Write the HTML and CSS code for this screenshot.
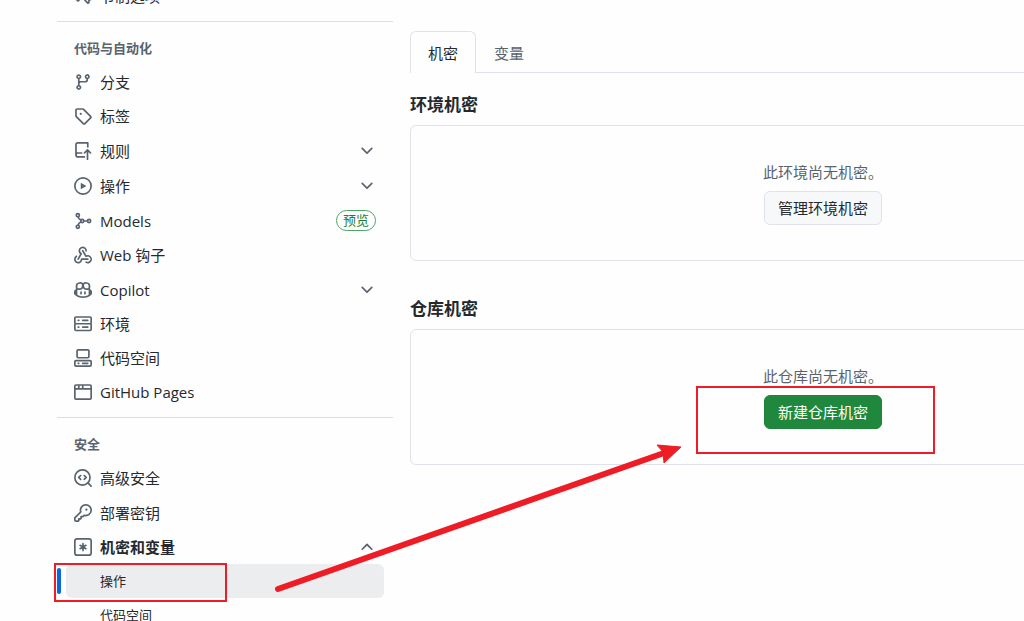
FILE: index.html
```html
<!DOCTYPE html>
<html lang="zh-CN">
<head>
    <meta charset="UTF-8">
    <meta name="viewport" content="width=device-width, initial-scale=1.0">
    <title>机密和变量 · 操作</title>
    <link rel="stylesheet" href="styles.css">
</head>
<body>

<div class="layout">
    <!-- 侧边栏 -->
    <nav class="sidebar" aria-label="仓库设置">
        <ul class="nav-list">
            <li><a class="nav-item" href="#">
                <svg class="icon" viewBox="0 0 16 16"><path d="M1.75 1h8.5c.966 0 1.75.784 1.75 1.75v5.5A1.75 1.75 0 0 1 10.25 10H7.061l-2.574 2.573A1.458 1.458 0 0 1 2 11.543V10h-.25A1.75 1.75 0 0 1 0 8.25v-5.5C0 1.784.784 1 1.75 1ZM1.5 2.75v5.5c0 .138.112.25.25.25h1a.75.75 0 0 1 .75.75v2.19l2.72-2.72a.749.749 0 0 1 .53-.22h3.5a.25.25 0 0 0 .25-.25v-5.5a.25.25 0 0 0-.25-.25h-8.5a.25.25 0 0 0-.25.25Zm13 2a.25.25 0 0 0-.25-.25h-.5a.75.75 0 0 1 0-1.5h.5c.966 0 1.75.784 1.75 1.75v5.5A1.75 1.75 0 0 1 14.25 12H14v1.543a1.458 1.458 0 0 1-2.487 1.03L9.22 12.28a.749.749 0 0 1 1.06-1.06l2.22 2.22v-2.19a.75.75 0 0 1 .75-.75h1a.25.25 0 0 0 .25-.25Z"/></svg>
                <span class="label">节制选项</span>
            </a></li>
        </ul>

        <section class="nav-group">
            <h3>代码与自动化</h3>
            <ul class="nav-list">
                <li><a class="nav-item" href="#">
                    <svg class="icon" viewBox="0 0 16 16"><path d="M9.5 3.25a2.25 2.25 0 1 1 3 2.122V6A2.5 2.5 0 0 1 10 8.5H6a1 1 0 0 0-1 1v1.128a2.251 2.251 0 1 1-1.5 0V5.372a2.25 2.25 0 1 1 1.5 0v1.836A2.493 2.493 0 0 1 6 7h4a1 1 0 0 0 1-1v-.628A2.25 2.25 0 0 1 9.5 3.25Zm-6 0a.75.75 0 1 0 1.5 0 .75.75 0 0 0-1.5 0Zm8.25-.75a.75.75 0 1 0 0 1.5.75.75 0 0 0 0-1.5ZM4.25 12a.75.75 0 1 0 0 1.5.75.75 0 0 0 0-1.5Z"/></svg>
                    <span class="label">分支</span>
                </a></li>
                <li><a class="nav-item" href="#">
                    <svg class="icon" viewBox="0 0 16 16"><path d="M1 7.775V2.75C1 1.784 1.784 1 2.75 1h5.025c.464 0 .91.184 1.238.513l6.25 6.25a1.75 1.75 0 0 1 0 2.474l-5.026 5.026a1.75 1.75 0 0 1-2.474 0l-6.25-6.25A1.752 1.752 0 0 1 1 7.775Zm1.5 0c0 .066.026.13.073.177l6.25 6.25a.25.25 0 0 0 .354 0l5.025-5.025a.25.25 0 0 0 0-.354l-6.25-6.25a.25.25 0 0 0-.177-.073H2.75a.25.25 0 0 0-.25.25ZM6 5a1 1 0 1 1 0 2 1 1 0 0 1 0-2Z"/></svg>
                    <span class="label">标签</span>
                </a></li>
                <li><button class="nav-item tall" type="button" aria-expanded="false">
                    <svg class="icon" viewBox="0 0 16 16"><path d="M1 2.5A2.5 2.5 0 0 1 3.5 0h8.75a.75.75 0 0 1 .75.75v3.5a.75.75 0 0 1-1.5 0V1.5h-8a1 1 0 0 0-1 1v6.708A2.493 2.493 0 0 1 3.5 9h3.25a.75.75 0 0 1 0 1.5H3.5a1 1 0 0 0 0 2h5.75a.75.75 0 0 1 0 1.5H3.5A2.5 2.5 0 0 1 1 11.5Zm13.23 7.79-1.48-1.486v6.446a.75.75 0 0 1-1.5 0V8.804L9.77 10.29a.75.75 0 0 1-1.06-1.06l2.76-2.77a.75.75 0 0 1 1.06 0l2.76 2.77a.75.75 0 0 1-1.06 1.06Z"/></svg>
                    <span class="label">规则</span>
                    <svg class="chevron" viewBox="0 0 16 16"><path d="M12.78 5.22a.749.749 0 0 1 0 1.06l-4.25 4.25a.749.749 0 0 1-1.06 0L3.22 6.28a.749.749 0 1 1 1.06-1.06L8 8.939l3.72-3.719a.749.749 0 0 1 1.06 0Z"/></svg>
                </button></li>
                <li><button class="nav-item tall" type="button" aria-expanded="false">
                    <svg class="icon" viewBox="0 0 16 16"><path d="M8 0a8 8 0 1 1 0 16A8 8 0 0 1 8 0ZM1.5 8a6.5 6.5 0 1 0 13 0 6.5 6.5 0 0 0-13 0Zm4.879-2.773 4.264 2.559a.25.25 0 0 1 0 .428l-4.264 2.559A.25.25 0 0 1 6 10.559V5.442a.25.25 0 0 1 .379-.215Z"/></svg>
                    <span class="label">操作</span>
                    <svg class="chevron" viewBox="0 0 16 16"><path d="M12.78 5.22a.749.749 0 0 1 0 1.06l-4.25 4.25a.749.749 0 0 1-1.06 0L3.22 6.28a.749.749 0 1 1 1.06-1.06L8 8.939l3.72-3.719a.749.749 0 0 1 1.06 0Z"/></svg>
                </button></li>
                <li><a class="nav-item tall" href="#">
                    <svg class="icon line" viewBox="0 0 16 16"><circle cx="3.4" cy="2.8" r="1.4"/><circle cx="3.4" cy="13.2" r="1.4"/><circle cx="7.3" cy="8" r="1.4"/><circle cx="13.4" cy="8" r="1.4"/><path d="M8.8 8h3.1M3.7 4.3c.2 1.3 1 2.2 2.4 2.8M3.7 11.7c.2-1.3 1-2.2 2.4-2.8"/></svg>
                    <span class="label">Models</span>
                    <span class="badge">预览</span>
                </a></li>
                <li><a class="nav-item" href="#">
                    <svg class="icon" viewBox="0 0 16 16"><path d="M5.5 4.25a2.25 2.25 0 0 1 4.5 0 .75.75 0 0 0 1.5 0 3.75 3.75 0 1 0-6.14 2.889l-2.272 4.258a.75.75 0 0 0 1.324.706L7 7.25a.75.75 0 0 0-.309-1.015A2.25 2.25 0 0 1 5.5 4.25Z"/><path d="M7.364 3.607a.75.75 0 0 1 1.03.257l2.608 4.349a3.75 3.75 0 1 1-.628 6.785.75.75 0 0 1 .752-1.299 2.25 2.25 0 1 0-.033-3.88.75.75 0 0 1-1.03-.256L7.107 4.636a.75.75 0 0 1 .257-1.03Z"/><path d="M2.9 8.776A.75.75 0 0 1 2.625 9.8 2.25 2.25 0 1 0 6 11.75a.75.75 0 0 1 .75-.751h5.5a.75.75 0 0 1 0 1.5H7.425a3.751 3.751 0 1 1-5.55-3.998.75.75 0 0 1 1.024.274Z"/></svg>
                    <span class="label">Web 钩子</span>
                </a></li>
                <li><button class="nav-item tall" type="button" aria-expanded="false">
                    <svg class="icon" viewBox="0 0 16 16"><path d="M7.998 15.035c-4.562 0-7.873-2.914-7.998-3.749V9.338c.085-.628.677-1.686 1.588-2.065.013-.07.024-.143.036-.218.029-.183.06-.384.126-.612-.201-.508-.254-1.084-.254-1.656 0-.87.128-1.769.693-2.484.579-.733 1.494-1.124 2.724-1.261 1.206-.134 2.262.034 2.944.765.05.053.096.108.139.165.044-.057.094-.112.143-.165.682-.731 1.738-.899 2.944-.765 1.23.137 2.145.528 2.724 1.261.566.715.693 1.614.693 2.484 0 .572-.053 1.148-.254 1.656.066.228.098.429.126.612.012.076.024.148.037.218.924.385 1.522 1.471 1.591 2.095v1.872c0 .766-3.351 3.795-8.002 3.795Zm0-1.485c2.28 0 4.584-1.11 5.002-1.433V7.862l-.023-.116c-.49.21-1.075.291-1.727.291-1.146 0-2.059-.327-2.71-.991A3.222 3.222 0 0 1 8 6.303a3.24 3.24 0 0 1-.544.743c-.65.664-1.563.991-2.71.991-.652 0-1.236-.081-1.727-.291l-.023.116v4.255c.419.323 2.722 1.433 5.002 1.433ZM6.762 2.83c-.193-.206-.637-.413-1.682-.297-1.019.113-1.479.404-1.713.7-.247.312-.369.789-.369 1.554 0 .793.129 1.171.308 1.371.162.181.519.379 1.442.379.853 0 1.339-.235 1.638-.54.315-.322.527-.827.617-1.553.117-.935-.037-1.395-.241-1.614Zm4.155-.297c-1.044-.116-1.488.091-1.681.297-.204.219-.359.679-.242 1.614.091.726.303 1.231.618 1.553.299.305.784.54 1.638.54.922 0 1.28-.198 1.442-.379.179-.2.308-.578.308-1.371 0-.765-.123-1.242-.37-1.554-.233-.296-.693-.587-1.713-.7Z"/><path d="M6.25 9.037a.75.75 0 0 1 .75.75v1.501a.75.75 0 0 1-1.5 0V9.787a.75.75 0 0 1 .75-.75Zm4.25.75v1.501a.75.75 0 0 1-1.5 0V9.787a.75.75 0 0 1 1.5 0Z"/></svg>
                    <span class="label">Copilot</span>
                    <svg class="chevron" viewBox="0 0 16 16"><path d="M12.78 5.22a.749.749 0 0 1 0 1.06l-4.25 4.25a.749.749 0 0 1-1.06 0L3.22 6.28a.749.749 0 1 1 1.06-1.06L8 8.939l3.72-3.719a.749.749 0 0 1 1.06 0Z"/></svg>
                </button></li>
                <li><a class="nav-item" href="#">
                    <svg class="icon" viewBox="0 0 16 16"><path d="M1.75 1h12.5c.966 0 1.75.784 1.75 1.75v4c0 .372-.116.717-.314 1 .198.283.314.628.314 1v4a1.75 1.75 0 0 1-1.75 1.75H1.75A1.75 1.75 0 0 1 0 12.75v-4c0-.358.109-.707.314-1a1.739 1.739 0 0 1-.314-1v-4C0 1.784.784 1 1.75 1ZM1.5 2.75v4c0 .138.112.25.25.25h12.5a.25.25 0 0 0 .25-.25v-4a.25.25 0 0 0-.25-.25H1.75a.25.25 0 0 0-.25.25Zm.25 5.75a.25.25 0 0 0-.25.25v4c0 .138.112.25.25.25h12.5a.25.25 0 0 0 .25-.25v-4a.25.25 0 0 0-.25-.25ZM7 4.75A.75.75 0 0 1 7.75 4h4.5a.75.75 0 0 1 0 1.5h-4.5A.75.75 0 0 1 7 4.75ZM7.75 10h4.5a.75.75 0 0 1 0 1.5h-4.5a.75.75 0 0 1 0-1.5ZM3 4.75A.75.75 0 0 1 3.75 4h.5a.75.75 0 0 1 0 1.5h-.5A.75.75 0 0 1 3 4.75ZM3.75 10h.5a.75.75 0 0 1 0 1.5h-.5a.75.75 0 0 1 0-1.5Z"/></svg>
                    <span class="label">环境</span>
                </a></li>
                <li><a class="nav-item" href="#">
                    <svg class="icon" viewBox="0 0 16 16"><path d="M0 11.25c0-.966.784-1.75 1.75-1.75h12.5c.966 0 1.75.784 1.75 1.75v3A1.75 1.75 0 0 1 14.25 16H1.75A1.75 1.75 0 0 1 0 14.25Zm2-9.5C2 .784 2.784 0 3.75 0h8.5C13.216 0 14 .784 14 1.75v5a1.75 1.75 0 0 1-1.75 1.75h-8.5A1.75 1.75 0 0 1 2 6.75Zm1.75-.25a.25.25 0 0 0-.25.25v5c0 .138.112.25.25.25h8.5a.25.25 0 0 0 .25-.25v-5a.25.25 0 0 0-.25-.25Zm-2 9.5a.25.25 0 0 0-.25.25v3c0 .138.112.25.25.25h12.5a.25.25 0 0 0 .25-.25v-3a.25.25 0 0 0-.25-.25Z"/><path d="M7 12.75a.75.75 0 0 1 .75-.75h4.5a.75.75 0 0 1 0 1.5h-4.5a.75.75 0 0 1-.75-.75Zm-4 0a.75.75 0 0 1 .75-.75h.5a.75.75 0 0 1 0 1.5h-.5a.75.75 0 0 1-.75-.75Z"/></svg>
                    <span class="label">代码空间</span>
                </a></li>
                <li><a class="nav-item" href="#">
                    <svg class="icon" viewBox="0 0 16 16"><path d="M0 2.75C0 1.784.784 1 1.75 1h12.5c.966 0 1.75.784 1.75 1.75v10.5A1.75 1.75 0 0 1 14.25 15H1.75A1.75 1.75 0 0 1 0 13.25ZM14.5 6h-13v7.25c0 .138.112.25.25.25h12.5a.25.25 0 0 0 .25-.25Zm-6-3.5v2h6V2.75a.25.25 0 0 0-.25-.25ZM5 2.5v2h2v-2Zm-3.25 0a.25.25 0 0 0-.25.25V4.5h2v-2Z"/></svg>
                    <span class="label">GitHub Pages</span>
                </a></li>
            </ul>
        </section>

        <section class="nav-group">
            <h3>安全</h3>
            <ul class="nav-list">
                <li><a class="nav-item" href="#">
                    <svg class="icon line" viewBox="0 0 16 16"><circle cx="7.5" cy="7.5" r="6.75"/><path d="M12.4 12.4l2.8 2.8M5.9 5.8 4.2 7.5l1.7 1.7M9.1 5.8l1.7 1.7-1.7 1.7"/></svg>
                    <span class="label">高级安全</span>
                </a></li>
                <li><a class="nav-item tall" href="#">
                    <svg class="icon" viewBox="0 0 16 16"><path d="M10.5 0a5.499 5.499 0 1 1-1.288 10.848l-.932.932a.749.749 0 0 1-.53.22H7v.75a.749.749 0 0 1-.22.53l-.5.5a.749.749 0 0 1-.53.22H5v.75a.749.749 0 0 1-.22.53l-.5.5a.749.749 0 0 1-.53.22h-2A1.75 1.75 0 0 1 0 14.25v-2c0-.199.079-.389.22-.53l4.932-4.932A5.5 5.5 0 0 1 10.5 0Zm-4 5.5c-.001.431.069.86.205 1.269a.75.75 0 0 1-.181.768L1.5 12.56v1.69c0 .138.112.25.25.25h1.69l.06-.06v-1.19a.75.75 0 0 1 .75-.75h1.19l.06-.06v-1.19a.75.75 0 0 1 .75-.75h1.19l1.023-1.025a.75.75 0 0 1 .768-.18A4 4 0 1 0 6.5 5.5ZM11 6a1 1 0 1 1 0-2 1 1 0 0 1 0 2Z"/></svg>
                    <span class="label">部署密钥</span>
                </a></li>
                <li>
                    <button class="nav-item open" type="button" aria-expanded="true">
                        <svg class="icon line" viewBox="0 0 16 16"><rect x=".75" y=".75" width="14.5" height="14.5" rx="2"/><path d="M8 5v6M5.4 6.5l5.2 3M10.6 6.5l-5.2 3"/></svg>
                        <span class="label">机密和变量</span>
                        <svg class="chevron" viewBox="0 0 16 16"><path d="M3.22 10.53a.749.749 0 0 1 0-1.06l4.25-4.25a.749.749 0 0 1 1.06 0l4.25 4.25a.749.749 0 1 1-1.06 1.06L8 6.811 4.28 10.53a.749.749 0 0 1-1.06 0Z"/></svg>
                    </button>
                    <ul class="sub-list">
                        <li><a class="sub-item current" href="#" aria-current="page">操作</a></li>
                        <li><a class="sub-item" href="#">代码空间</a></li>
                    </ul>
                </li>
            </ul>
        </section>
    </nav>

    <!-- 主要内容 -->
    <main class="content">
        <div class="tabs">
            <a class="tab selected" href="#">机密</a>
            <a class="tab" href="#">变量</a>
        </div>

        <section class="secrets">
            <h2>环境机密</h2>
            <div class="box">
                <p>此环境尚无机密。</p>
                <button class="btn" type="button">管理环境机密</button>
            </div>
        </section>

        <section class="secrets">
            <h2>仓库机密</h2>
            <div class="box">
                <p>此仓库尚无机密。</p>
                <button class="btn primary" type="button">新建仓库机密</button>
            </div>
        </section>
    </main>
</div>

<!-- 标注 -->
<svg class="marks" width="1024" height="621" viewBox="0 0 1024 621" aria-hidden="true">
    <rect x="55" y="564" width="171" height="37"/>
    <rect x="697" y="387" width="237" height="66"/>
    <path class="shaft" d="M278 589 664 453"/>
    <path class="head" d="M681 447 657 445 663 452 664 463Z"/>
</svg>

</body>
</html>
```
FILE: styles.css
```css
* {
    box-sizing: border-box;
}
body {
    margin: 0;
    height: 100vh;
    overflow: hidden;
    position: relative;
    background-color: #fefefe;
    color: #25292e;
    font-family: "Open Sans", "Noto Sans CJK SC", sans-serif;
    font-size: 15px;
    line-height: 22px;
}
h2, h3, p, ul {
    margin: 0;
    padding: 0;
}
ul {
    list-style: none;
}
a {
    color: inherit;
    text-decoration: none;
}
button {
    font: inherit;
    color: inherit;
    cursor: pointer;
}
.layout {
    display: flex;
    gap: 17px;
    padding-left: 57px;
}

/* Sidebar */
.sidebar {
    flex: 0 0 336px;
    margin-top: -21px; /* scrolled */
}
.nav-group {
    margin-top: 8px;
    border-top: 1px solid #d8dfe5;
    padding-top: 16px;
}
.nav-group h3 {
    padding-left: 17px;
    margin-bottom: 7px;
    color: #59636e;
    font-size: 13px;
    line-height: 20px;
    font-weight: 600;
}
.nav-item {
    display: flex;
    align-items: center;
    gap: 8px;
    width: 100%;
    height: 34px;
    padding: 0 17px;
    border: none;
    background: none;
    text-align: left;
}
.nav-item.tall {
    height: 35px;
}
.nav-item.open {
    font-weight: 700;
}
.label {
    flex: 1;
}
.icon, .chevron {
    flex: none;
    width: 18px;
    height: 18px;
    fill: #59636e;
}
.icon.line {
    fill: none;
    stroke: #59636e;
    stroke-width: 1.5;
    stroke-linecap: round;
    stroke-linejoin: round;
}
.badge {
    padding: 0 6px;
    border: 1px solid #4fa565;
    border-radius: 11px;
    color: #1a7f37;
    font-size: 13px;
    line-height: 19px;
}
.sub-item {
    display: flex;
    align-items: center;
    height: 34px;
    margin: 0 9px;
    padding-left: 34px;
    border-radius: 6px;
    font-size: 13px;
}
.sub-item.current {
    position: relative;
    background-color: #ecedef;
}
.sub-item.current::before {
    content: "";
    position: absolute;
    left: -9px;
    top: 4px;
    width: 4px;
    height: 26px;
    border-radius: 4px;
    background-color: #0969da;
}

/* Content */
.content {
    flex: 1 0 826px;
    padding-top: 31px;
}
.tabs {
    display: flex;
    border-bottom: 1px solid #dfe3e9;
}
.tab {
    padding: 10px 17px 8px;
    border: 1px solid transparent;
    border-bottom: none;
    color: #59636e;
}
.tab.selected {
    margin-bottom: -1px;
    border-color: #dfe3e9;
    border-radius: 6px 6px 0 0;
    background-color: #fefefe;
    color: #25292e;
}
.secrets {
    margin-top: 20px;
}
.secrets + .secrets {
    margin-top: 36px;
}
.secrets h2 {
    margin-bottom: 8px;
    font-size: 17px;
    line-height: 24px;
    font-weight: 700;
}
.box {
    display: flex;
    flex-direction: column;
    align-items: center;
    gap: 8px;
    padding: 35px;
    border: 1px solid #dfe3e9;
    border-radius: 6px;
    color: #59636e;
}
.btn {
    height: 34px;
    padding: 0 13px;
    border: 1px solid #dfe3e9;
    border-radius: 6px;
    background-color: #f6f8fa;
    color: #25292e;
}
.btn.primary {
    border-color: #1f823b;
    background-color: #1f883d;
    color: #fff;
}

/* Red marks over the page */
.marks {
    position: absolute;
    top: 0;
    left: 0;
    fill: none;
    stroke: #ee1c25;
    stroke-width: 2;
    pointer-events: none;
}
.marks .shaft {
    stroke-width: 6;
    stroke-linecap: round;
}
.marks .head {
    fill: #ee1c25;
    stroke-width: 1;
}
```
